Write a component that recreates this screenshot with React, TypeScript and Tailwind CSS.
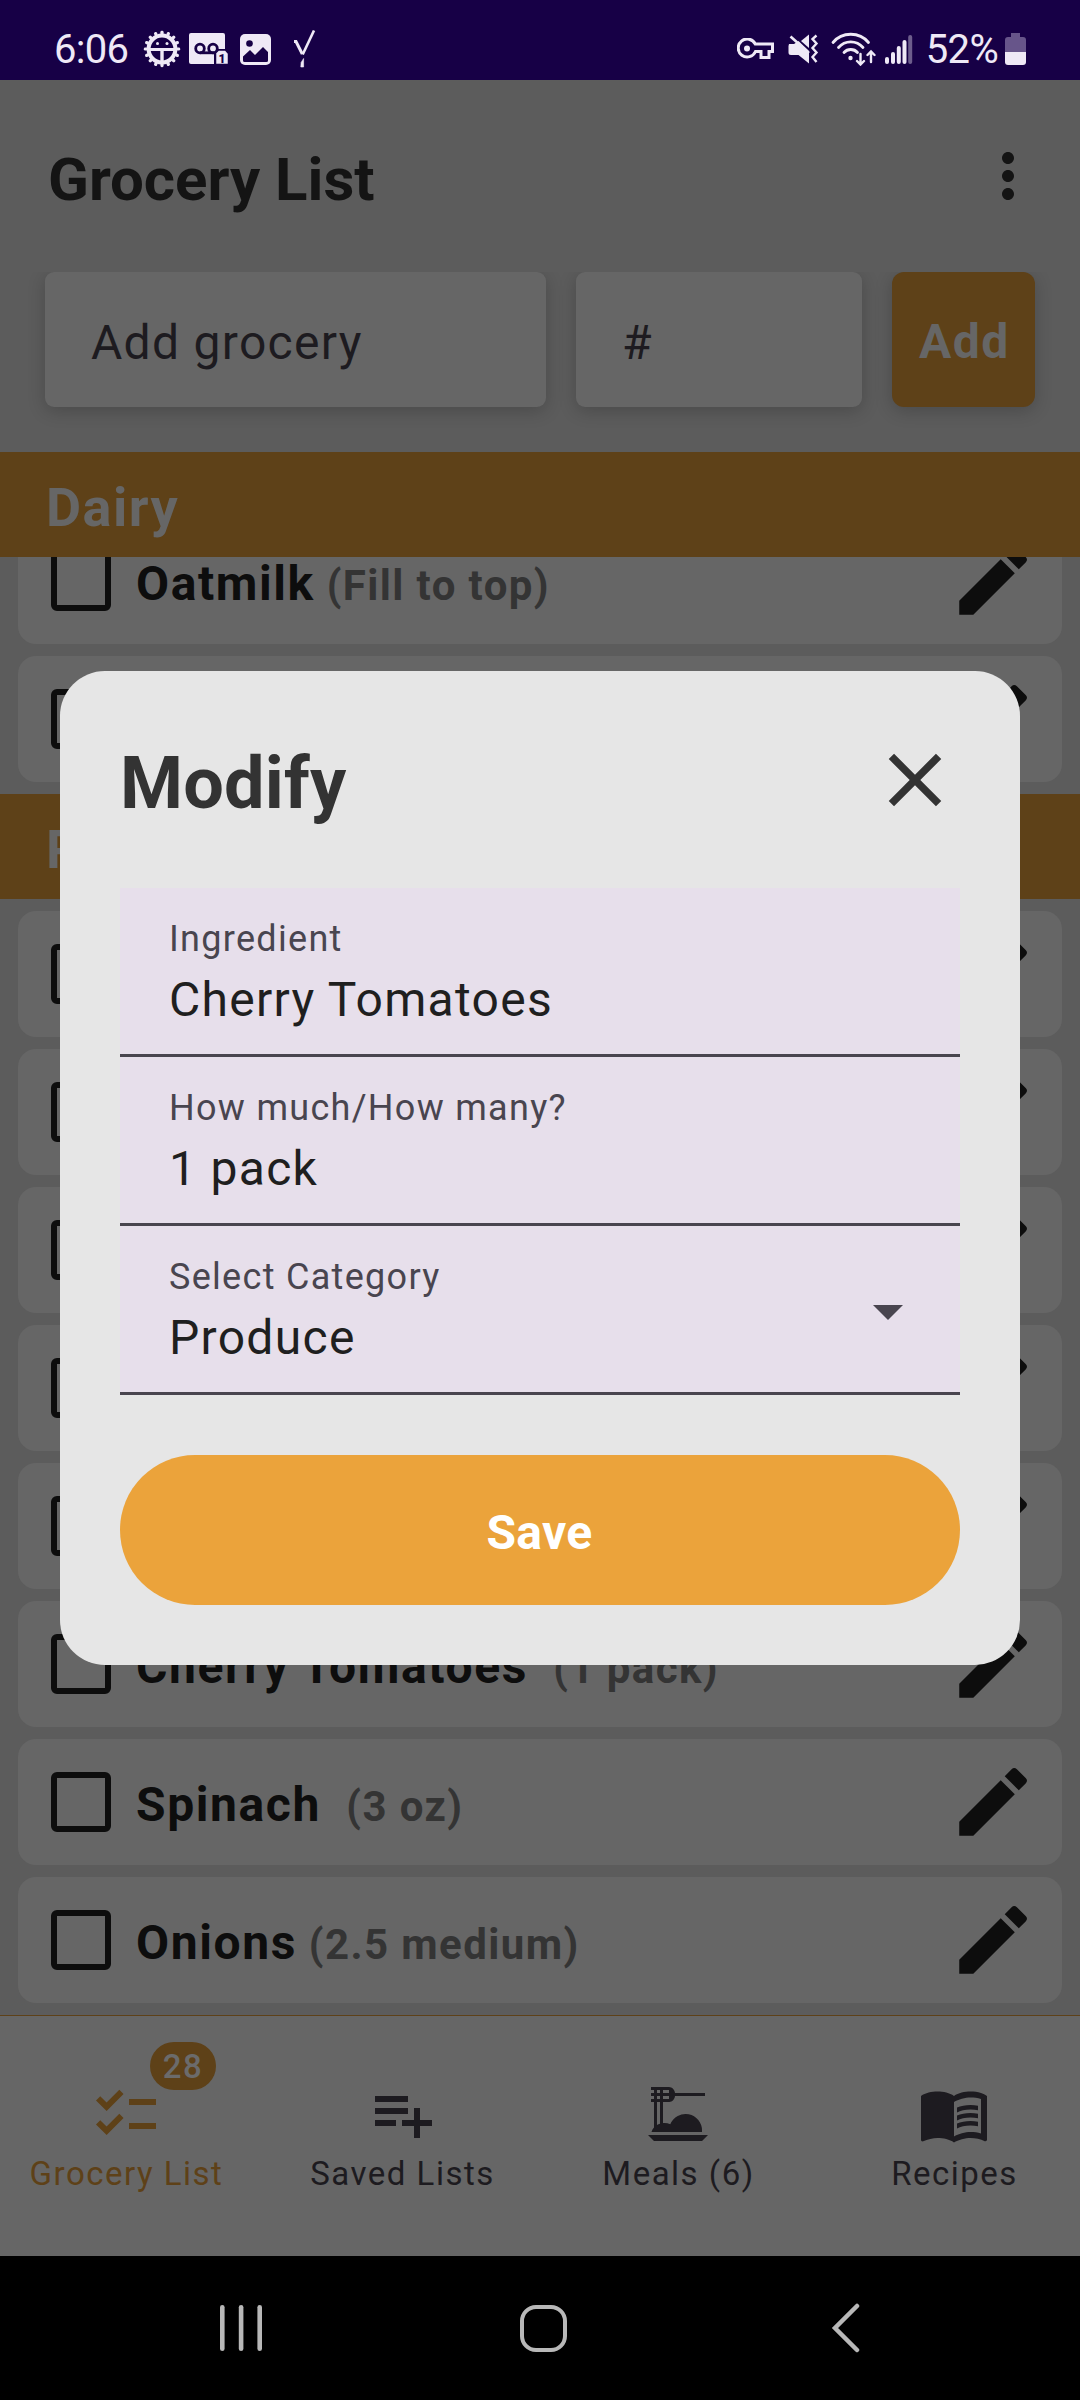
import type { ReactNode } from "react";
import { MdChecklist, MdClose, MdDinnerDining, MdEdit, MdMenuBook, MdMoreVert, MdPlaylistAdd } from "react-icons/md";

type Item = { name: string; note?: string };

const dairy: Item[] = [{ name: "Oatmilk", note: " (Fill to top)" }, { name: "" }];

const produce: Item[] = [
  { name: "" },
  { name: "" },
  { name: "" },
  { name: "" },
  { name: "" },
  { name: "Cherry Tomatoes ", note: " (1 pack)" },
  { name: "Spinach ", note: " (3 oz)" },
  { name: "Onions", note: " (2.5 medium)" },
];

function DebugIcon() {
  const teeth = Array.from({ length: 16 }, (_, i) => i * 22.5);
  return (
    <svg className="ml-[15px] h-[38px] w-[38px]" viewBox="0 0 38 38" fill="none">
      <circle cx="19" cy="19" r="13.4" stroke="#efe9f6" strokeWidth="4" />
      {teeth.map((a) => (
        <rect key={a} x="17.4" y="0.8" width="3.2" height="4" rx="1.4" fill="#efe9f6" transform={`rotate(${a} 19 19)`} />
      ))}
      <path d="M6 18h26v3H20.700V32h-3.400V21H6z" fill="#efe9f6" />
      <circle cx="14.500" cy="13.500" r="1.500" fill="#efe9f6" />
      <circle cx="24" cy="13.500" r="1.500" fill="#efe9f6" />
    </svg>
  );
}

function VoicemailIcon() {
  return (
    <svg className="ml-[8px] h-[32px] w-[40px]" viewBox="0 0 40 32">
      <path d="M2 0h32a2 2 0 0 1 2 2v14h-8l-3 4v11H2a2 2 0 0 1-2-2V2a2 2 0 0 1 2-2z" fill="#efe9f6" />
      <g fill="none" stroke="#170046" strokeWidth="2.800">
        <circle cx="11" cy="15.500" r="4.300" />
        <circle cx="24" cy="15.500" r="4.300" />
        <path d="M11 19.800h14" />
      </g>
      <path d="M29.500 17h7l3 3.500v11H26.500V20z" fill="#efe9f6" stroke="#170046" strokeWidth="1.500" />
      <text x="29.500" y="29.500" fontSize="12" fontWeight="900" fill="#170046" className="font-['Roboto',sans-serif]">
        1
      </text>
    </svg>
  );
}

function StatusBar() {
  return (
    <div className="flex h-[80px] items-center justify-between bg-[#170046] pt-[18px] pl-[54px] pr-[54px] text-[40px] text-[#efe9f6]">
      <div className="flex items-center">
        <span className="pt-[2px] leading-[48px] tracking-[-0.700px]">6:06</span>
        <DebugIcon />
        <VoicemailIcon />
        <svg className="ml-[11px] h-[31px] w-[31px]" viewBox="0 0 31 31">
          <rect width="31" height="31" rx="5" fill="#efe9f6" />
          <circle cx="9.500" cy="9.500" r="3.300" fill="#170046" />
          <path d="M3 22.500l7-6.500 5 5 8-8 5 5V26.500a1.500 1.500 0 0 1-1.500 1.500h-22A1.500 1.500 0 0 1 3 26.500z" fill="#170046" />
        </svg>
        <svg className="ml-[22px] h-[38px] w-[23px]" viewBox="0 0 23 38" fill="none" stroke="#efe9f6">
          <path d="M1 11.500h2L9.300 24" strokeWidth="3" />
          <path d="M21 0.500L9.700 24.500" strokeWidth="2.600" />
          <path d="M7.800 37l0.300-4.500 2.500-4v8.500z" fill="#efe9f6" strokeWidth="0.600" />
        </svg>
      </div>
      <div className="flex items-center">
        <svg className="h-[22px] w-[37px]" viewBox="0 0 37 22" fill="none" stroke="#efe9f6">
          <path d="M18.300 6H35.500v7.500H32v6h-8v-6h-5.500A9 9 0 1 1 18.300 6z" strokeWidth="3" />
          <circle cx="10" cy="10.500" r="3" fill="#efe9f6" stroke="none" />
        </svg>
        <svg className="ml-[14px] h-[30px] w-[31px]" viewBox="0 0 31 30">
          <path d="M1 10h5l4.500-3L21 17v12.500L10.500 21H3a2.500 2.500 0 0 1-2.500-2.500V12z" fill="#efe9f6" />
          <path d="M13 7l8-6.500V14z" fill="#efe9f6" />
          <path d="M2.500 2.500L21 19" stroke="#efe9f6" strokeWidth="2.600" />
          <path d="M28.500 1.500l-4 3.500 4 4.500-4 4.500 4 4.500-4 4.500 4 5" fill="none" stroke="#efe9f6" strokeWidth="2.400" />
        </svg>
        <svg className="ml-[12px] h-[34px] w-[45px]" viewBox="0 0 45 34" fill="none" stroke="#efe9f6" strokeLinecap="round">
          <g strokeWidth="2.800">
            <path d="M2 10.500c9-11 26.500-11 35.500 0" />
            <path d="M7.500 15.500c6.500-7.500 18-7.500 24.500 0" />
            <path d="M13 20.500c3.500-4 10-4 13.500 0" />
          </g>
          <circle cx="19.500" cy="26" r="2.200" fill="#efe9f6" stroke="none" />
          <g strokeWidth="2.400">
            <path d="M29.500 22v10M26 29l3.500 3.500L33 29" />
            <path d="M40 30V20M36.500 23l3.500-3.500 3.500 3.500" />
          </g>
        </svg>
        <svg className="ml-[9px] h-[31px] w-[28px]" viewBox="0 0 28 31" fill="#efe9f6">
          <rect x="0" y="23" width="4" height="7" rx="2" />
          <rect x="6" y="18" width="4" height="12" rx="2" />
          <rect x="11.800" y="12" width="4" height="18" rx="2" />
          <rect x="17.500" y="6" width="4" height="24" rx="2" />
          <rect x="23.200" y="1" width="4" height="29" rx="2" opacity="0.400" />
        </svg>
        <span className="ml-[13px] pt-[2px] leading-[48px] tracking-[-0.700px]">52%</span>
        <svg className="ml-[7px] h-[32px] w-[21px]" viewBox="0 0 21 32">
          <path d="M6 0h9v4h3a3 3 0 0 1 3 3v12H0V7a3 3 0 0 1 3-3h3z" fill="#67558a" />
          <path d="M0 19h21v10a3 3 0 0 1-3 3H3a3 3 0 0 1-3-3z" fill="#efe9f6" />
        </svg>
      </div>
    </div>
  );
}

function ItemCard({ item }: { item: Item }) {
  return (
    <div className="flex h-[126px] shrink-0 items-center rounded-[18px] bg-[#666666] pr-[24px] pl-[33px]">
      <div className="h-[60px] w-[60px] rounded-[6px] border-[6px] border-[#0d0d0d]" />
      <div className="ml-[25px] flex flex-1 items-baseline pt-[7px] text-[48px] leading-[46px] font-bold tracking-[1.6px] whitespace-pre text-[#0d0d0d]">
        <span>{item.name}</span>
        <span className="text-[42px] leading-[44px] tracking-[1.4px] text-[#343434]">{item.note}</span>
      </div>
      <MdEdit className="h-[90px] w-[90px] text-[#0d0d0d]" />
    </div>
  );
}

function SectionHeader({ children }: { children: ReactNode }) {
  return (
    <div className="flex h-[105px] shrink-0 items-center bg-[#5e4118] pt-[6px] pl-[46px] text-[54px] font-bold tracking-[1.5px] text-[#666666]">
      {children}
    </div>
  );
}

function Field({ label, value, menu }: { label: string; value: string; menu?: boolean }) {
  return (
    <div className="flex h-[169px] items-start justify-between border-b-[3px] border-[#49454f] bg-[#e7dfeb] pr-[36px] pl-[49px]">
      <div className="pt-[27px]">
        <div className="text-[36px] leading-[48px] tracking-[1.3px] text-[#49454f]">{label}</div>
        <div className="mt-[7px] text-[48px] leading-[60px] tracking-[1.3px] text-[#1f1f1f]">{value}</div>
      </div>
      {menu && (
        <svg className="mt-[49px] h-[72px] w-[72px] text-[#49454f]" viewBox="0 0 24 24" fill="currentColor">
          <path d="M7 10l5 5 5-5z" />
        </svg>
      )}
    </div>
  );
}

function Tab({ icon, label, active, badge }: { icon: ReactNode; label: string; active?: boolean; badge?: string }) {
  return (
    <div className={`flex flex-col items-center pt-[62px] ${active ? "text-[#5e4118]" : "text-[#1d1b20]"}`}>
      <div className="relative h-[72px] w-[72px]">
        {icon}
        {badge && (
          <span className="absolute -top-[36px] left-[60px] flex h-[48px] w-[66px] items-center justify-center rounded-full bg-[#5e4118] pt-px text-[33px] font-medium tracking-[1.5px] text-[#6b6b6b]">
            {badge}
          </span>
        )}
      </div>
      <div className="mt-[6px] pl-px text-[33px] leading-[36px] tracking-[1.5px] whitespace-nowrap">{label}</div>
    </div>
  );
}

function EditDialog() {
  return (
    <div className="absolute top-[671px] left-[60px] flex h-[994px] w-[960px] flex-col rounded-[45px] bg-[#e6e6e6] px-[60px]">
      <div className="flex h-[217px] items-center justify-between">
        <h2 className="pt-[8px] text-[72px] font-bold tracking-[0.200px] text-[#333333]">Modify</h2>
        <MdClose className="h-[90px] w-[90px] text-[#333333]" />
      </div>
      <Field label="Ingredient" value="Cherry Tomatoes" />
      <Field label="How much/How many?" value="1 pack" />
      <Field label="Select Category" value="Produce" menu />
      <button className="mt-[60px] flex h-[150px] items-center justify-center rounded-full bg-[#eba33b] pt-[6px] pr-px text-[48px] font-bold tracking-[0.300px] text-white">
        Save
      </button>
    </div>
  );
}

export default function App() {
  return (
    <div className="relative flex h-[2400px] w-[1080px] flex-col overflow-hidden bg-[#5c5c5c] font-['Roboto',sans-serif]">
      <StatusBar />
      <header className="flex h-[192px] shrink-0 items-center justify-between pr-[36px] pl-[48px]">
        <h1 className="pt-[7px] text-[60px] font-bold text-[#141414]">Grocery List</h1>
        <MdMoreVert className="h-[72px] w-[72px] text-[#141414]" />
      </header>
      <div className="shrink-0 overflow-hidden">
        <div className="flex h-[180px] items-start gap-[30px] px-[45px] text-[48px]">
          <div className="flex h-[135px] w-[501px] items-center rounded-[9px] bg-[#666666] pt-[6px] pl-[46px] tracking-[1.3px] text-[#1d1b20] shadow-[0_4px_18px_rgba(0,0,0,0.2)]">
            Add grocery
          </div>
          <div className="flex h-[135px] w-[286px] items-center rounded-[9px] bg-[#666666] pt-[6px] pl-[46px] text-[#1d1b20] shadow-[0_4px_18px_rgba(0,0,0,0.2)]">
            #
          </div>
          <button className="flex h-[135px] w-[143px] items-center justify-center rounded-[12px] bg-[#5e4118] pt-[4px] pl-[2px] font-bold tracking-[1.5px] text-[#666666] shadow-[0_4px_18px_rgba(0,0,0,0.2)]">
            Add
          </button>
        </div>
      </div>
      <SectionHeader>Dairy</SectionHeader>
      <main className="h-[1458px] shrink-0 overflow-hidden">
        <div className="-mt-[39px] flex flex-col gap-[12px]">
          <div className="flex flex-col gap-[12px] px-[18px]">
            {dairy.map((item, i) => (
              <ItemCard key={i} item={item} />
            ))}
          </div>
          <SectionHeader>Produce</SectionHeader>
          <div className="flex flex-col gap-[12px] px-[18px]">
            {produce.map((item, i) => (
              <ItemCard key={i} item={item} />
            ))}
          </div>
        </div>
      </main>
      <nav className="grid h-[241px] shrink-0 grid-cols-4 gap-[24px] border-t border-[#5e4118] bg-[#666666]">
        <Tab icon={<MdChecklist className="h-[72px] w-[72px]" />} label="Grocery List" active badge="28" />
        <Tab icon={<MdPlaylistAdd className="h-[72px] w-[72px]" />} label="Saved Lists" />
        <Tab icon={<MdDinnerDining className="h-[72px] w-[72px]" />} label="Meals (6)" />
        <Tab icon={<MdMenuBook className="h-[72px] w-[72px]" />} label="Recipes" />
      </nav>
      <div className="flex h-[144px] shrink-0 items-center justify-between bg-black pr-[219px] pl-[219px] text-[#b8b8b8]">
        <svg className="h-[48px] w-[45px]" viewBox="0 0 45 48" fill="currentColor">
          <rect x="1" y="1" width="4.600" height="46" rx="2.300" />
          <rect x="19.800" y="1" width="4.600" height="46" rx="2.300" />
          <rect x="38.400" y="1" width="4.600" height="46" rx="2.300" />
        </svg>
        <div className="ml-[-9px] h-[47px] w-[47px] rounded-[16px] border-[4.500px] border-[#b8b8b8]" />
        <svg className="h-[50px] w-[30px]" viewBox="0 0 30 50" fill="none" stroke="currentColor" strokeWidth="4.500" strokeLinecap="round">
          <path d="M26 3L4 25l22 22" />
        </svg>
      </div>
      <EditDialog />
    </div>
  );
}
